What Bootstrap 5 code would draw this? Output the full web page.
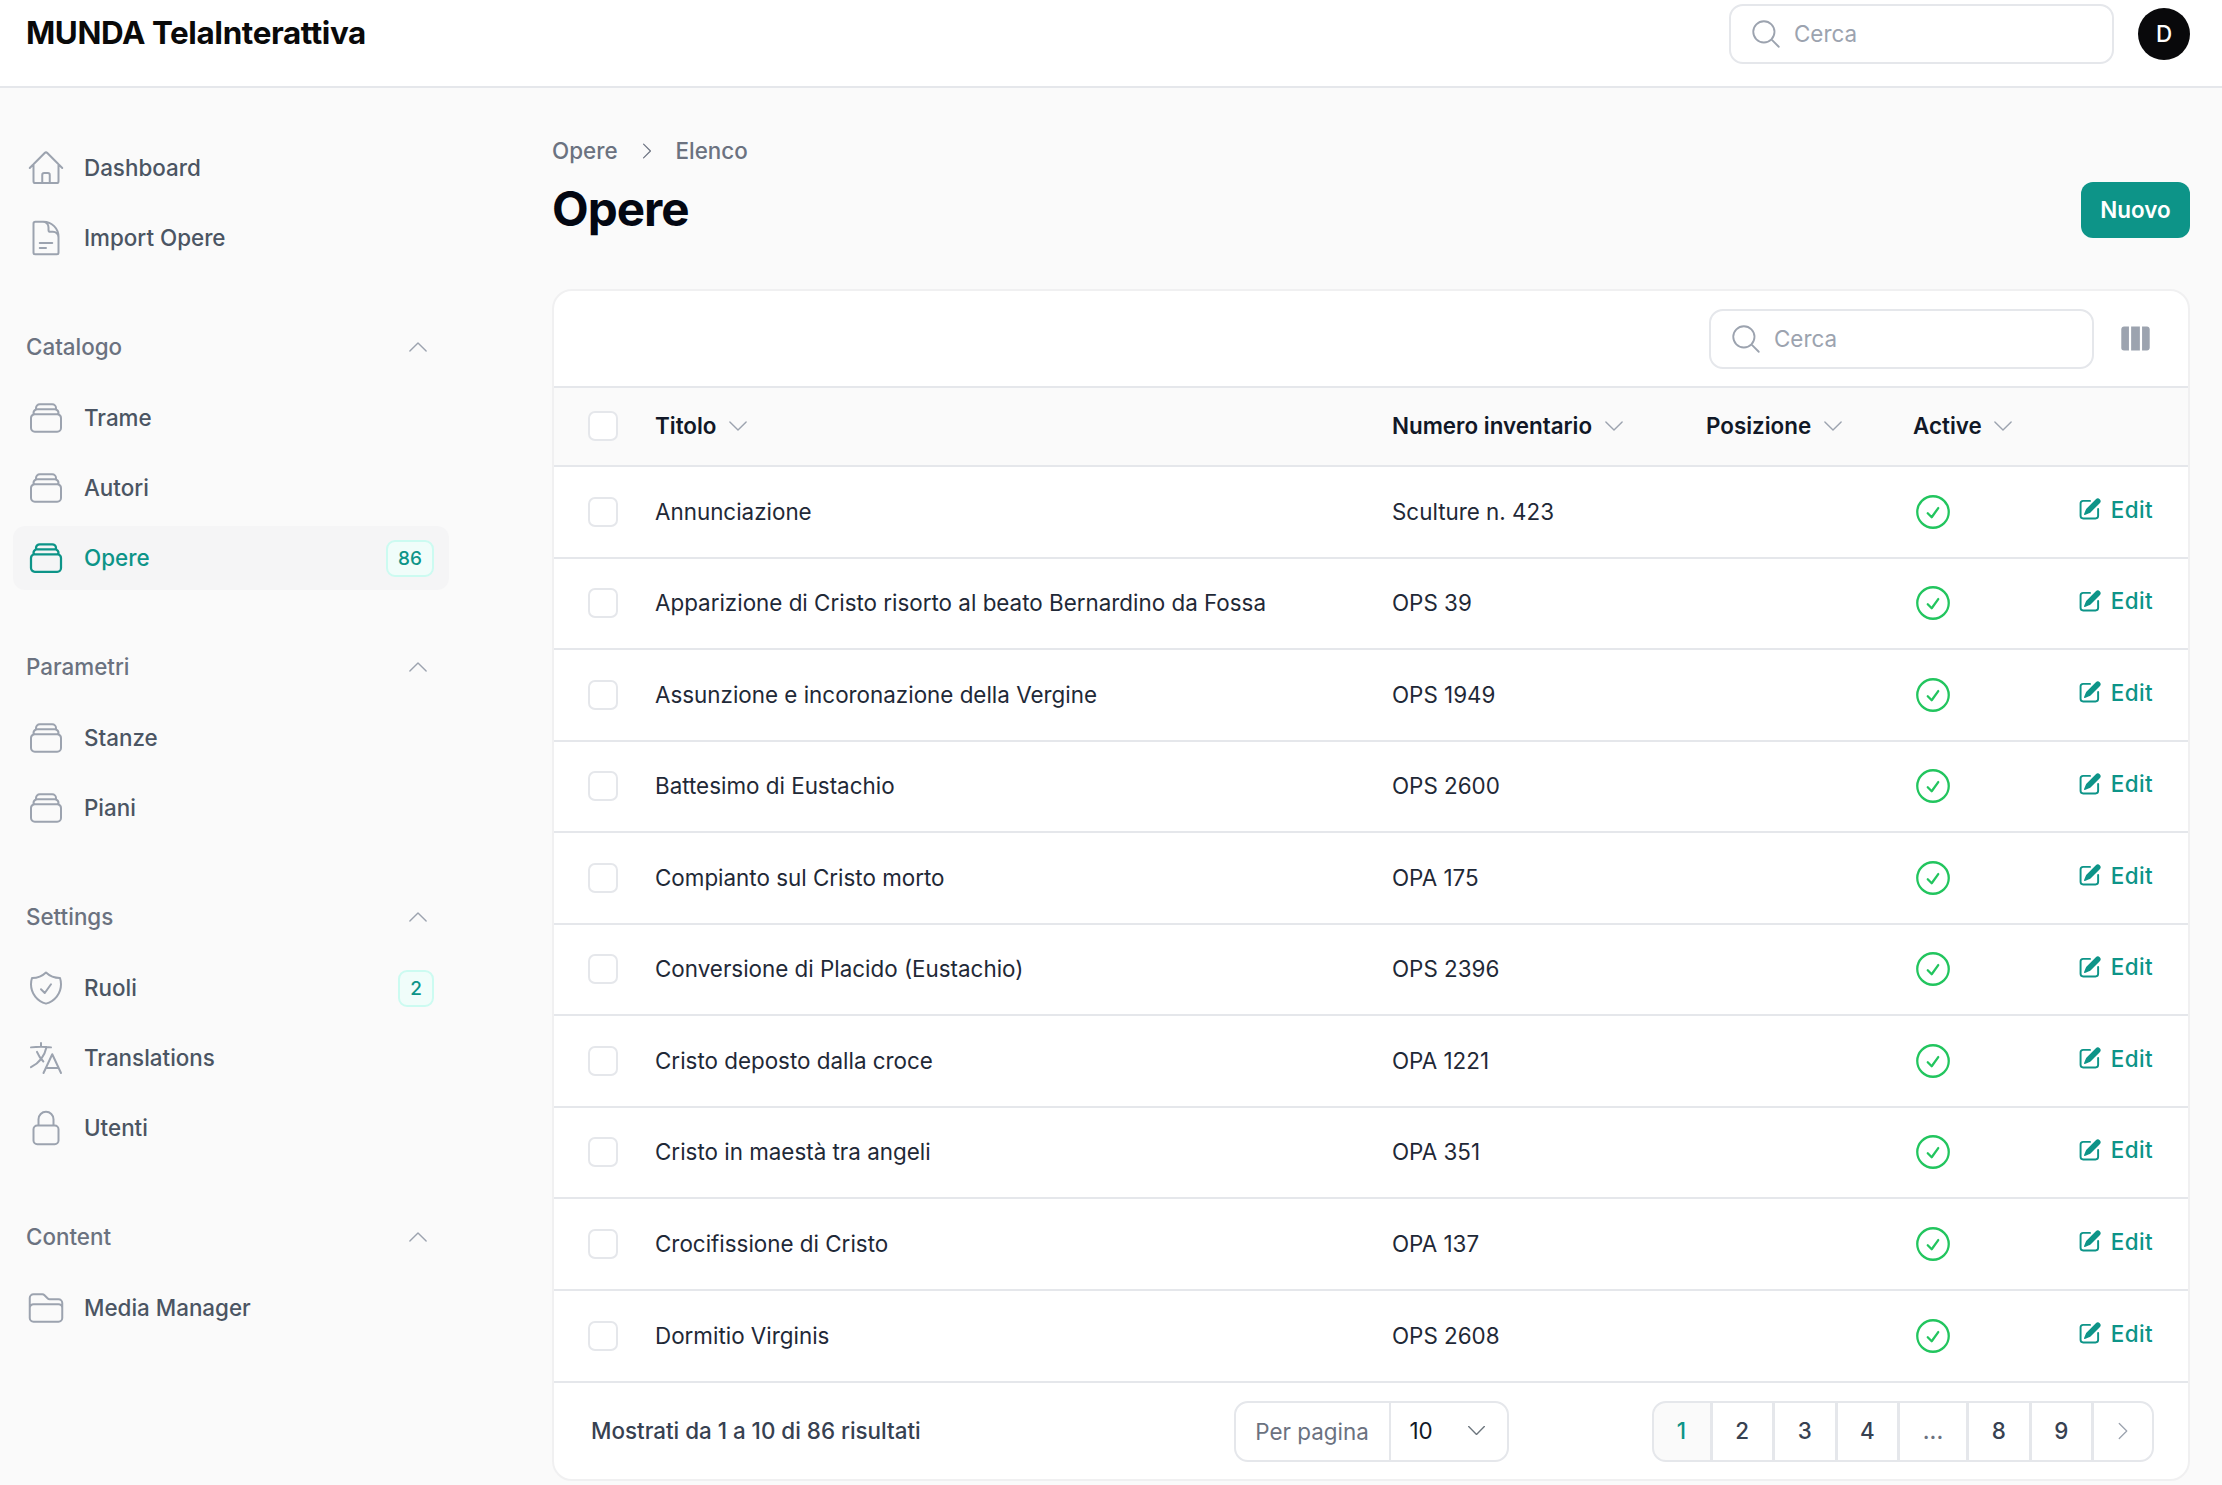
<!DOCTYPE html>
<html lang="it">
<head>
  <meta charset="UTF-8">
  <title>Opere - MUNDA TelaInterattiva</title>
  <link href="https://cdn.jsdelivr.net/npm/bootstrap@5.3.3/dist/css/bootstrap.min.css" rel="stylesheet">
  <style>
    body {
      background-color: #fafafa;
      font-family: Inter, "Liberation Sans", sans-serif;
      font-size: 22.4px;
      color: #111827;
    }
    .ico { fill: none; stroke: currentColor; stroke-width: 1.3; stroke-linecap: round; stroke-linejoin: round; flex-shrink: 0; }
    .ico-solid { fill: currentColor; stroke: none; flex-shrink: 0; }

    .top-bar { height: 88px; background: #fff; border-bottom: 2px solid #e5e7eb; padding: 0 32px 0 26px; }
    .brand-name { font-size: 31.4px; font-weight: 700; letter-spacing: -0.4px; color: #0a0a0a; margin-top: -18px; }
    .search-box { width: 385px; height: 60px; border: 2px solid #e5e7eb; border-radius: 14px; background: #fff; padding: 0 18px; gap: 11px; color: #9ca3af; }
    .search-box input { border: 0; outline: 0; padding: 0; background: transparent; font-size: 22.4px; box-shadow: none; }
    .search-box input::placeholder { color: #9ca3af; }
    .top-bar .search-box { margin-top: -18px; }
    .user-dot { width: 52px; height: 52px; background: #09090b; color: #fff; font-size: 22.4px; font-weight: 500; margin: -18px 0 0 24px; }

    .side-col { width: 462px; flex-shrink: 0; padding: 48px 13px 0; }
    .side-group { margin-bottom: 57px; }
    .side-label { height: 40px; padding: 0 18px 0 13px; margin-bottom: 19px; color: #6b7280; font-weight: 500; }
    .side-label .ico { color: #9ca3af; }
    .side-item { height: 64px; padding: 0 15px 0 13px; gap: 18px; color: #4b5563; font-weight: 500; text-decoration: none; border-radius: 12px; margin-bottom: 6px; }
    .side-item .ico { color: #9ca3af; stroke-width: 1.2; }
    .side-item.is-on { background: #f5f5f6; color: #0d9488; }
    .side-item.is-on .ico { color: #0d9488; stroke-width: 1.35; }
    .count-pill { background: #f0fdfa; border: 2px solid #ccfbf1; border-radius: 9px; color: #0d9488; font-size: 19px; font-weight: 500; line-height: 1; padding: 7px 10px; }

    .main-col { padding: 49px 32px 6px 90px; }
    .crumbs { line-height: 28px; color: #6b7280; font-weight: 500; gap: 18px; }
    .page-title { font-size: 47.6px; font-weight: 700; letter-spacing: -1px; line-height: 60px; color: #030712; margin: 14px 0 0; }
    .btn-new { background: #0d9488; border: 0; color: #fff; font-size: 22.4px; font-weight: 600; height: 56px; width: 109px; border-radius: 12px; padding: 0; margin-top: 16px; }
    .btn-new:hover { background: #0f766e; color: #fff; }

    .data-card { margin-top: 50px; background: #fff; border: 2px solid #f0f0f1; border-radius: 20px; overflow: hidden; }
    .card-tools { height: 95px; padding-right: 35px; gap: 24px; }
    .columns-ico { color: #9ca3af; }
    .data-table { table-layout: fixed; width: 100%; margin: 0; font-size: 22.4px; }
    .data-table > :not(caption) > * > * { border-bottom-width: 0; border-top: 2px solid #e5e7eb; padding: 0 0 0 18px; vertical-align: middle; }
    .data-table > :not(caption) > * > th { background: #fafafa; height: 79px; font-weight: 600; color: #111827; padding-bottom: 2px; }
    .data-table > :not(caption) > * > td { height: 91.5px; color: #1f2937; }
    .data-table > :not(caption) > * > .cell-cb { padding-left: 34px; }
    .data-table > :not(caption) > * > .cell-edit { padding: 0 35px 0 0; text-align: right; }
    .col-cb { width: 83px; }
    .col-num { width: 314px; }
    .col-pos { width: 207px; }
    .col-act { width: 155px; }
    .col-edit { width: 138px; }
    .sort-ico { color: #9ca3af; margin-left: 3px; vertical-align: -5px; }
    .form-check-input.row-check { width: 30px; height: 30px; margin: 0; border: 2px solid #e5e7eb; border-radius: 7px; display: block; }
    .ok-ico { color: #22c55e; display: block; margin-left: -1px; }
    .edit-link { color: #0d9488; font-weight: 500; letter-spacing: .4px; text-decoration: none; gap: 8px; }

    .card-foot { height: 98px; border-top: 2px solid #e5e7eb; padding: 0 34px 0 37px; color: #374151; font-weight: 500; }
    .per-page { width: 275px; height: 61px; border: 2px solid #e5e7eb; border-radius: 14px; margin-left: auto; margin-right: 143px; }
    .per-page-label { width: 155px; border-right: 2px solid #e5e7eb; color: #6b7280; text-align: center; font-weight: 400; line-height: 57px; }
    .per-page-val { flex: 1; padding: 0 18px 0 19px; color: #111827; font-weight: 400; }
    .pager { height: 61px; margin: 0; }
    .pager .page-link { height: 61px; width: 63.5px; padding: 0; display: flex; align-items: center; justify-content: center; border: 2px solid #e5e7eb; margin-left: -2px; color: #374151; font-size: 22.4px; font-weight: 500; background: #fff; }
    .pager .page-item:first-child .page-link { width: 60px; margin-left: 0; background: #fafafa; color: #0d9488; border-radius: 14px 0 0 14px; }
    .pager .page-item:last-child .page-link { width: 62px; border-radius: 0 14px 14px 0; color: #9ca3af; }
    .pager .page-gap .page-link { width: 70px; color: #6b7280; }
  </style>
</head>
<body>

<svg width="0" height="0" class="position-absolute">
  <symbol id="i-home" viewBox="0 0 24 24"><path d="M2.25 12l8.954-8.955c.44-.439 1.152-.439 1.591 0L21.75 12M4.5 9.75v10.125c0 .621.504 1.125 1.125 1.125H9.75v-4.875c0-.621.504-1.125 1.125-1.125h2.25c.621 0 1.125.504 1.125 1.125V21h4.125c.621 0 1.125-.504 1.125-1.125V9.75M8.25 21h8.25"/></symbol>
  <symbol id="i-doc" viewBox="0 0 24 24"><path d="M19.5 14.25v-2.625a3.375 3.375 0 00-3.375-3.375h-1.5A1.125 1.125 0 0113.5 7.125v-1.5a3.375 3.375 0 00-3.375-3.375H8.25m0 12.75h7.5m-7.5 3H12M10.5 2.25H5.625c-.621 0-1.125.504-1.125 1.125v17.25c0 .621.504 1.125 1.125 1.125h12.75c.621 0 1.125-.504 1.125-1.125V11.25a9 9 0 00-9-9z"/></symbol>
  <symbol id="i-stack" viewBox="0 0 24 24"><path d="M6 6.878V6a2.25 2.25 0 012.25-2.25h7.5A2.25 2.25 0 0118 6v.878m-12 0c.235-.083.487-.128.75-.128h10.5c.263 0 .515.045.75.128m-12 0A2.25 2.25 0 004.5 9v.878m13.5-3A2.25 2.25 0 0119.5 9v.878m0 0a2.246 2.246 0 00-.75-.128H5.25c-.263 0-.515.045-.75.128m15 0A2.25 2.25 0 0121 12v6a2.25 2.25 0 01-2.25 2.25H5.25A2.25 2.25 0 013 18v-6c0-.98.626-1.813 1.5-2.122"/></symbol>
  <symbol id="i-shield" viewBox="0 0 24 24"><path d="M9 12.75L11.25 15 15 9.75m-3-7.036A11.959 11.959 0 013.598 6 11.99 11.99 0 003 9.749c0 5.592 3.824 10.29 9 11.623 5.176-1.332 9-6.03 9-11.622 0-1.31-.21-2.571-.598-3.751h-.152c-3.196 0-6.1-1.248-8.25-3.285z"/></symbol>
  <symbol id="i-lang" viewBox="0 0 24 24"><path d="M10.5 21l5.25-11.25L21 21m-9-3h7.5M3 5.621a48.474 48.474 0 016-.371m0 0c1.12 0 2.233.038 3.334.114M9 5.25V3m3.334 2.364C11.176 10.658 7.69 15.08 3 17.502m9.334-12.138c.896.061 1.785.147 2.666.257m-4.589 8.495a18.023 18.023 0 01-3.827-5.802"/></symbol>
  <symbol id="i-lock" viewBox="0 0 24 24"><path d="M16.5 10.5V6.75a4.5 4.5 0 10-9 0v3.75m-.75 11.25h10.5a2.25 2.25 0 002.25-2.25v-6.75a2.25 2.25 0 00-2.25-2.25H6.75a2.25 2.25 0 00-2.25 2.25v6.75a2.25 2.25 0 002.25 2.25z"/></symbol>
  <symbol id="i-folder" viewBox="0 0 24 24"><path d="M2.25 12.75V12A2.25 2.25 0 014.5 9.75h15A2.25 2.25 0 0121.75 12v.75m-8.69-6.44l-2.12-2.12a1.5 1.5 0 00-1.061-.44H4.5A2.25 2.25 0 002.25 6v12a2.25 2.25 0 002.25 2.25h15A2.25 2.25 0 0021.75 18V9a2.25 2.25 0 00-2.25-2.25h-5.379a1.5 1.5 0 01-1.06-.44z"/></symbol>
  <symbol id="i-search" viewBox="0 0 24 24"><path d="M21 21l-5.197-5.197m0 0A7.5 7.5 0 105.196 5.196a7.5 7.5 0 0010.607 10.607z"/></symbol>
  <symbol id="i-up" viewBox="0 0 24 24"><path d="M4.5 15.75l7.5-7.5 7.5 7.5"/></symbol>
  <symbol id="i-down" viewBox="0 0 24 24"><path d="M19.5 8.25l-7.5 7.5-7.5-7.5"/></symbol>
  <symbol id="i-right" viewBox="0 0 24 24"><path d="M8.25 4.5l7.5 7.5-7.5 7.5"/></symbol>
  <symbol id="i-ok" viewBox="0 0 24 24"><path d="M9 12.75L11.25 15 15 9.75M21 12a9 9 0 11-18 0 9 9 0 0118 0z"/></symbol>
  <symbol id="i-cols" viewBox="0 0 24 24"><path d="M15 3.75H9v16.5h6V3.75zM16.5 20.25h3.375c1.035 0 1.875-.84 1.875-1.875V5.625c0-1.036-.84-1.875-1.875-1.875H16.5v16.5zM4.125 3.75H7.5v16.5H4.125a1.875 1.875 0 01-1.875-1.875V5.625c0-1.036.84-1.875 1.875-1.875z"/></symbol>
  <symbol id="i-edit" viewBox="0 0 20 20"><path d="M5.433 13.917l1.262-3.155A4 4 0 017.58 9.42l6.92-6.918a2.121 2.121 0 013 3l-6.92 6.918c-.383.383-.84.685-1.343.886l-3.154 1.262a.5.5 0 01-.65-.65z"/><path d="M3.5 5.75c0-.69.56-1.25 1.25-1.25H10A.75.75 0 0010 3H4.75A2.75 2.75 0 002 5.75v9.5A2.75 2.75 0 004.75 18h9.5A2.75 2.75 0 0017 15.25V10a.75.75 0 00-1.5 0v5.25c0 .69-.56 1.25-1.25 1.25h-9.5c-.69 0-1.25-.56-1.25-1.25v-9.5z"/></symbol>
</svg>

<header class="top-bar d-flex align-items-center">
  <div class="brand-name me-auto">MUNDA TelaInterattiva</div>
  <div class="search-box d-flex align-items-center">
    <svg class="ico" width="34" height="34"><use href="#i-search"/></svg>
    <input type="text" class="form-control" placeholder="Cerca">
  </div>
  <div class="user-dot rounded-circle d-flex align-items-center justify-content-center">D</div>
</header>

<div class="d-flex">
  <nav class="side-col">
    <div class="side-group">
      <a class="side-item d-flex align-items-center" href="#"><svg class="ico" width="40" height="40"><use href="#i-home"/></svg>Dashboard</a>
      <a class="side-item d-flex align-items-center" href="#"><svg class="ico" width="40" height="40"><use href="#i-doc"/></svg>Import Opere</a>
    </div>
    <div class="side-group">
      <div class="side-label d-flex align-items-center justify-content-between">Catalogo <svg class="ico" width="26" height="26"><use href="#i-up"/></svg></div>
      <a class="side-item d-flex align-items-center" href="#"><svg class="ico" width="40" height="40"><use href="#i-stack"/></svg>Trame</a>
      <a class="side-item d-flex align-items-center" href="#"><svg class="ico" width="40" height="40"><use href="#i-stack"/></svg>Autori</a>
      <a class="side-item is-on d-flex align-items-center" href="#"><svg class="ico" width="40" height="40"><use href="#i-stack"/></svg>Opere<span class="count-pill ms-auto">86</span></a>
    </div>
    <div class="side-group">
      <div class="side-label d-flex align-items-center justify-content-between">Parametri <svg class="ico" width="26" height="26"><use href="#i-up"/></svg></div>
      <a class="side-item d-flex align-items-center" href="#"><svg class="ico" width="40" height="40"><use href="#i-stack"/></svg>Stanze</a>
      <a class="side-item d-flex align-items-center" href="#"><svg class="ico" width="40" height="40"><use href="#i-stack"/></svg>Piani</a>
    </div>
    <div class="side-group">
      <div class="side-label d-flex align-items-center justify-content-between">Settings <svg class="ico" width="26" height="26"><use href="#i-up"/></svg></div>
      <a class="side-item d-flex align-items-center" href="#"><svg class="ico" width="40" height="40"><use href="#i-shield"/></svg>Ruoli<span class="count-pill ms-auto">2</span></a>
      <a class="side-item d-flex align-items-center" href="#"><svg class="ico" width="40" height="40"><use href="#i-lang"/></svg>Translations</a>
      <a class="side-item d-flex align-items-center" href="#"><svg class="ico" width="40" height="40"><use href="#i-lock"/></svg>Utenti</a>
    </div>
    <div class="side-group">
      <div class="side-label d-flex align-items-center justify-content-between">Content <svg class="ico" width="26" height="26"><use href="#i-up"/></svg></div>
      <a class="side-item d-flex align-items-center" href="#"><svg class="ico" width="40" height="40"><use href="#i-folder"/></svg>Media Manager</a>
    </div>
  </nav>

  <main class="main-col flex-grow-1">
    <div class="crumbs d-flex align-items-center">
      <span>Opere</span>
      <svg class="ico" width="22" height="22"><use href="#i-right"/></svg>
      <span>Elenco</span>
    </div>
    <div class="d-flex align-items-center justify-content-between">
      <h1 class="page-title">Opere</h1>
      <button type="button" class="btn btn-new">Nuovo</button>
    </div>

    <div class="data-card">
      <div class="card-tools d-flex align-items-center justify-content-end">
        <div class="search-box d-flex align-items-center">
          <svg class="ico" width="34" height="34"><use href="#i-search"/></svg>
          <input type="text" class="form-control" placeholder="Cerca">
        </div>
        <svg class="ico-solid columns-ico" width="35" height="35"><use href="#i-cols"/></svg>
      </div>

      <table class="table data-table">
        <colgroup>
          <col class="col-cb"><col><col class="col-num"><col class="col-pos"><col class="col-act"><col class="col-edit">
        </colgroup>
        <thead>
          <tr>
            <th class="cell-cb"><input class="form-check-input row-check" type="checkbox"></th>
            <th>Titolo <svg class="ico sort-ico" width="26" height="26"><use href="#i-down"/></svg></th>
            <th>Numero inventario <svg class="ico sort-ico" width="26" height="26"><use href="#i-down"/></svg></th>
            <th>Posizione <svg class="ico sort-ico" width="26" height="26"><use href="#i-down"/></svg></th>
            <th>Active <svg class="ico sort-ico" width="26" height="26"><use href="#i-down"/></svg></th>
            <th></th>
          </tr>
        </thead>
        <tbody>
          <tr>
            <td class="cell-cb"><input class="form-check-input row-check" type="checkbox"></td>
            <td>Annunciazione</td><td>Sculture n. 423</td><td></td>
            <td><svg class="ico ok-ico" width="42" height="42"><use href="#i-ok"/></svg></td>
            <td class="cell-edit"><a class="edit-link d-inline-flex align-items-center" href="#"><svg class="ico-solid" width="26" height="26"><use href="#i-edit"/></svg>Edit</a></td>
          </tr>
          <tr>
            <td class="cell-cb"><input class="form-check-input row-check" type="checkbox"></td>
            <td>Apparizione di Cristo risorto al beato Bernardino da Fossa</td><td>OPS 39</td><td></td>
            <td><svg class="ico ok-ico" width="42" height="42"><use href="#i-ok"/></svg></td>
            <td class="cell-edit"><a class="edit-link d-inline-flex align-items-center" href="#"><svg class="ico-solid" width="26" height="26"><use href="#i-edit"/></svg>Edit</a></td>
          </tr>
          <tr>
            <td class="cell-cb"><input class="form-check-input row-check" type="checkbox"></td>
            <td>Assunzione e incoronazione della Vergine</td><td>OPS 1949</td><td></td>
            <td><svg class="ico ok-ico" width="42" height="42"><use href="#i-ok"/></svg></td>
            <td class="cell-edit"><a class="edit-link d-inline-flex align-items-center" href="#"><svg class="ico-solid" width="26" height="26"><use href="#i-edit"/></svg>Edit</a></td>
          </tr>
          <tr>
            <td class="cell-cb"><input class="form-check-input row-check" type="checkbox"></td>
            <td>Battesimo di Eustachio</td><td>OPS 2600</td><td></td>
            <td><svg class="ico ok-ico" width="42" height="42"><use href="#i-ok"/></svg></td>
            <td class="cell-edit"><a class="edit-link d-inline-flex align-items-center" href="#"><svg class="ico-solid" width="26" height="26"><use href="#i-edit"/></svg>Edit</a></td>
          </tr>
          <tr>
            <td class="cell-cb"><input class="form-check-input row-check" type="checkbox"></td>
            <td>Compianto sul Cristo morto</td><td>OPA 175</td><td></td>
            <td><svg class="ico ok-ico" width="42" height="42"><use href="#i-ok"/></svg></td>
            <td class="cell-edit"><a class="edit-link d-inline-flex align-items-center" href="#"><svg class="ico-solid" width="26" height="26"><use href="#i-edit"/></svg>Edit</a></td>
          </tr>
          <tr>
            <td class="cell-cb"><input class="form-check-input row-check" type="checkbox"></td>
            <td>Conversione di Placido (Eustachio)</td><td>OPS 2396</td><td></td>
            <td><svg class="ico ok-ico" width="42" height="42"><use href="#i-ok"/></svg></td>
            <td class="cell-edit"><a class="edit-link d-inline-flex align-items-center" href="#"><svg class="ico-solid" width="26" height="26"><use href="#i-edit"/></svg>Edit</a></td>
          </tr>
          <tr>
            <td class="cell-cb"><input class="form-check-input row-check" type="checkbox"></td>
            <td>Cristo deposto dalla croce</td><td>OPA 1221</td><td></td>
            <td><svg class="ico ok-ico" width="42" height="42"><use href="#i-ok"/></svg></td>
            <td class="cell-edit"><a class="edit-link d-inline-flex align-items-center" href="#"><svg class="ico-solid" width="26" height="26"><use href="#i-edit"/></svg>Edit</a></td>
          </tr>
          <tr>
            <td class="cell-cb"><input class="form-check-input row-check" type="checkbox"></td>
            <td>Cristo in maestà tra angeli</td><td>OPA 351</td><td></td>
            <td><svg class="ico ok-ico" width="42" height="42"><use href="#i-ok"/></svg></td>
            <td class="cell-edit"><a class="edit-link d-inline-flex align-items-center" href="#"><svg class="ico-solid" width="26" height="26"><use href="#i-edit"/></svg>Edit</a></td>
          </tr>
          <tr>
            <td class="cell-cb"><input class="form-check-input row-check" type="checkbox"></td>
            <td>Crocifissione di Cristo</td><td>OPA 137</td><td></td>
            <td><svg class="ico ok-ico" width="42" height="42"><use href="#i-ok"/></svg></td>
            <td class="cell-edit"><a class="edit-link d-inline-flex align-items-center" href="#"><svg class="ico-solid" width="26" height="26"><use href="#i-edit"/></svg>Edit</a></td>
          </tr>
          <tr>
            <td class="cell-cb"><input class="form-check-input row-check" type="checkbox"></td>
            <td>Dormitio Virginis</td><td>OPS 2608</td><td></td>
            <td><svg class="ico ok-ico" width="42" height="42"><use href="#i-ok"/></svg></td>
            <td class="cell-edit"><a class="edit-link d-inline-flex align-items-center" href="#"><svg class="ico-solid" width="26" height="26"><use href="#i-edit"/></svg>Edit</a></td>
          </tr>
        </tbody>
      </table>

      <div class="card-foot d-flex align-items-center">
        <span>Mostrati da 1 a 10 di 86 risultati</span>
        <div class="per-page d-flex align-items-center">
          <span class="per-page-label">Per pagina</span>
          <span class="per-page-val d-flex align-items-center justify-content-between">10 <svg class="ico text-secondary" width="25" height="25"><use href="#i-down"/></svg></span>
        </div>
        <ul class="pagination pager">
          <li class="page-item"><a class="page-link" href="#">1</a></li>
          <li class="page-item"><a class="page-link" href="#">2</a></li>
          <li class="page-item"><a class="page-link" href="#">3</a></li>
          <li class="page-item"><a class="page-link" href="#">4</a></li>
          <li class="page-item page-gap"><a class="page-link" href="#">...</a></li>
          <li class="page-item"><a class="page-link" href="#">8</a></li>
          <li class="page-item"><a class="page-link" href="#">9</a></li>
          <li class="page-item"><a class="page-link" href="#"><svg class="ico" width="24" height="24"><use href="#i-right"/></svg></a></li>
        </ul>
      </div>
    </div>
  </main>
</div>

</body>
</html>
